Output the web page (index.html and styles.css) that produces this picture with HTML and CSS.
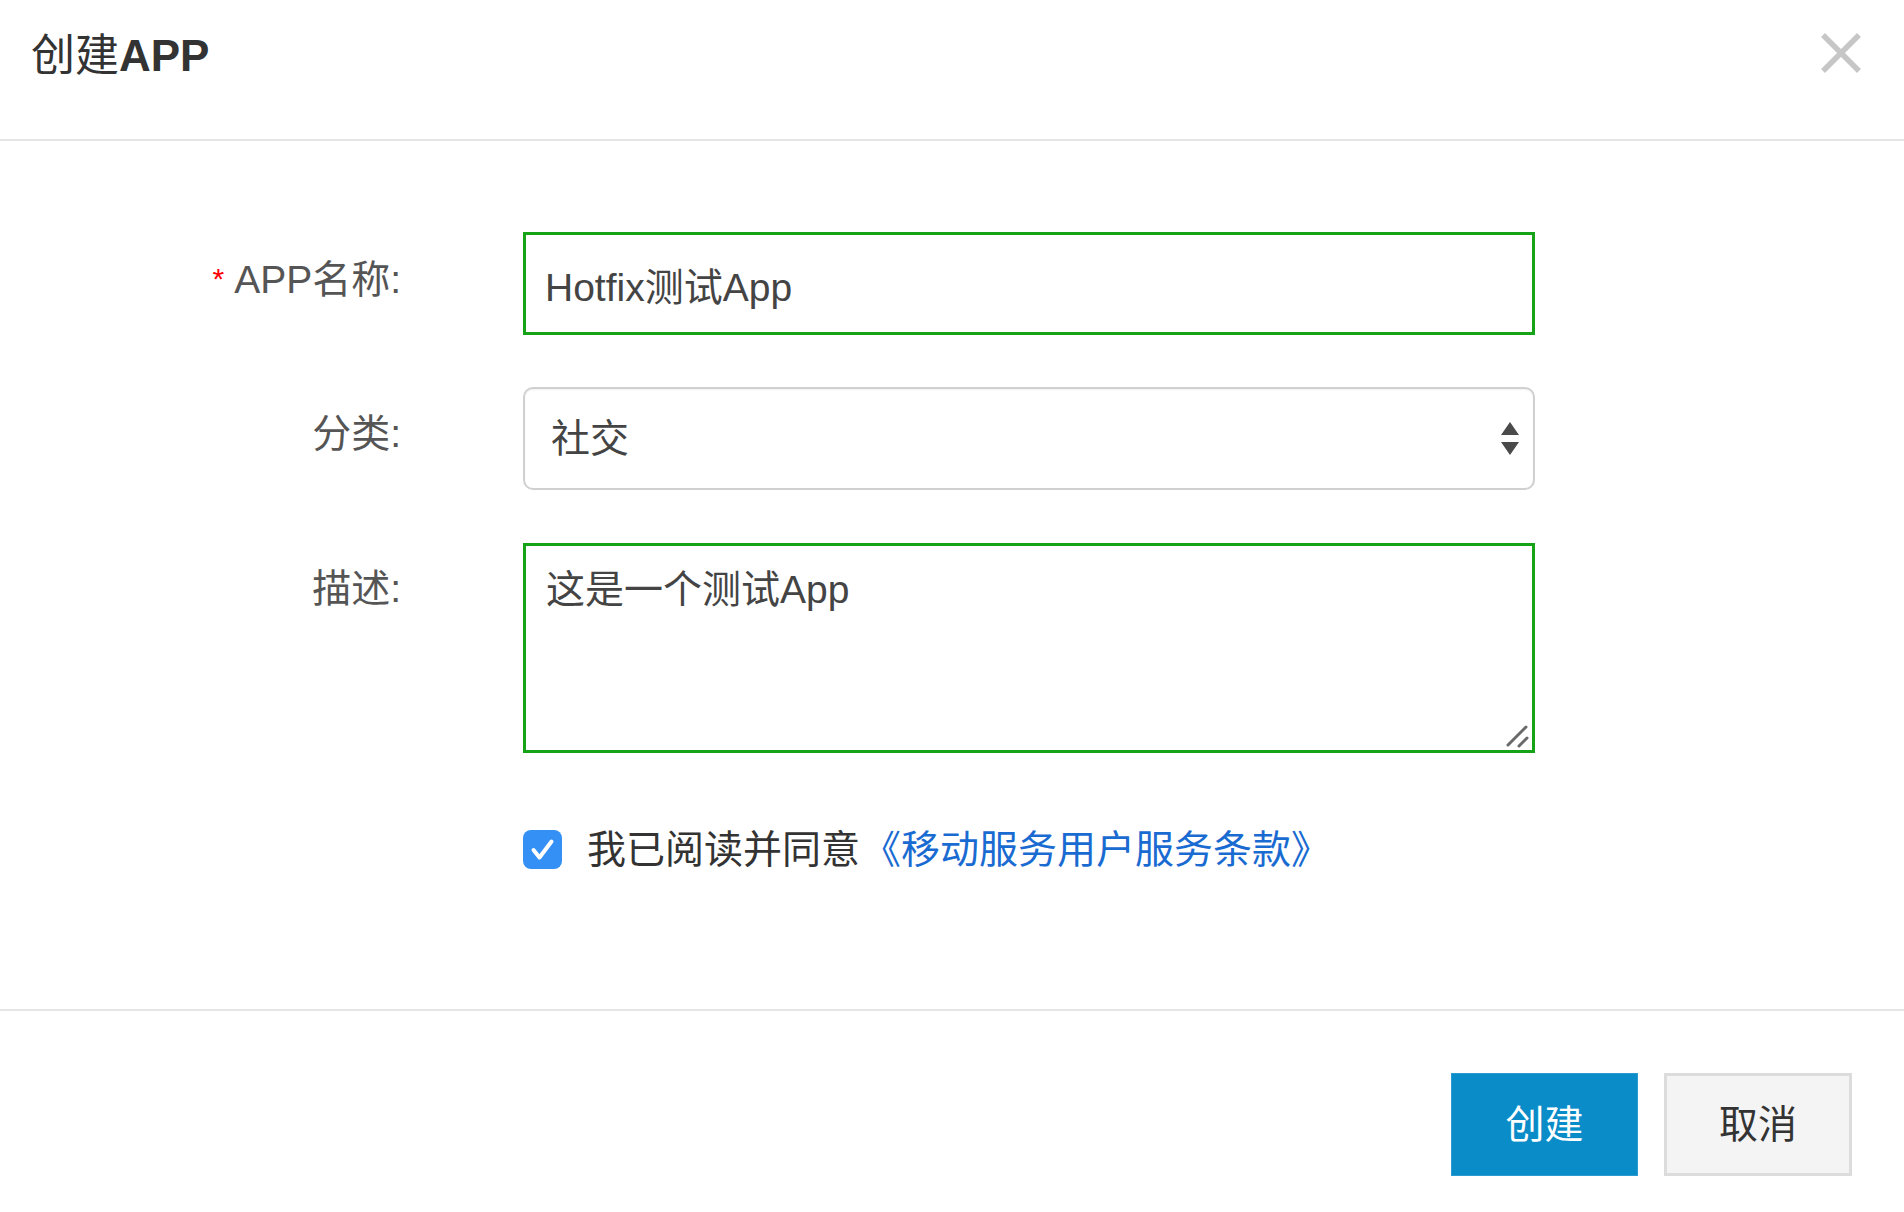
FILE: index.html
```html
<!DOCTYPE html>
<html lang="zh-CN">
<head>
<meta charset="utf-8">
<title>创建APP</title>
<link rel="stylesheet" href="styles.css">
</head>
<body>
<div class="dialog">
  <header class="dlg-head">
    <h1 class="dlg-title">创建<span class="dlg-title-en">APP</span></h1>
    <button class="dlg-close" type="button" aria-label="关闭">
      <svg width="42" height="42" viewBox="0 0 42 42"><path d="M3 3 L39 39 M39 3 L3 39" stroke="#c6c6c6" stroke-width="5.5" fill="none"/></svg>
    </button>
  </header>
  <form class="dlg-body">
    <div class="form-grid">
      <label class="field-label" for="app-name"><span class="req">*</span>APP名称:</label>
      <input id="app-name" class="field-input field-valid" type="text" value="Hotfix测试App">

      <label class="field-label" for="app-cat">分类:</label>
      <div class="select-wrap">
        <select id="app-cat" class="field-select"><option>社交</option></select>
        <svg class="select-arrows" width="18" height="33" viewBox="0 0 18 33"><path d="M9 0 L18 13 L0 13 Z M0 20 L18 20 L9 33 Z" fill="#4a4a4a"/></svg>
      </div>

      <label class="field-label" for="app-desc">描述:</label>
      <div class="textarea-wrap">
        <textarea id="app-desc" class="field-textarea field-valid">这是一个测试App</textarea>
        <svg class="textarea-grip" width="26" height="26" viewBox="0 0 26 26"><path d="M4 22 L22 4 M15 23 L23 15" stroke="#6a6a6a" stroke-width="3" stroke-linecap="round" fill="none"/></svg>
      </div>

      <span class="grid-spacer"></span>
      <label class="agree">
        <span class="agree-box"><svg width="39" height="39" viewBox="0 0 39 39"><path d="M10.5 20 L16.5 27.5 L28.5 11.5" stroke="#fff" stroke-width="4" fill="none" stroke-linecap="round" stroke-linejoin="round"/></svg></span>
        <span class="agree-text">我已阅读并同意</span><a class="agree-link" href="#">《移动服务用户服务条款》</a>
      </label>
    </div>
  </form>
  <footer class="dlg-foot">
    <button class="btn btn-primary" type="button">创建</button>
    <button class="btn btn-default" type="button">取消</button>
  </footer>
</div>
</body>
</html>
```
FILE: styles.css
```css
* { box-sizing: border-box; }
html, body { margin: 0; padding: 0; background: #fff; }
body {
  font-family: "Liberation Sans", "Noto Sans CJK SC", sans-serif;
  color: #333;
}
.dialog { width: 1904px; height: 1212px; display: flex; flex-direction: column; }

.dlg-head {
  height: 141px;
  border-bottom: 2px solid #e5e5e5;
  display: flex;
  justify-content: space-between;
  align-items: flex-start;
  padding: 0 42px 0 31px;
  flex: none;
}
.dlg-title {
  margin: 34px 0 0;
  font-size: 44px;
  line-height: 44px;
  font-weight: normal;
  color: #333;
}
.dlg-title-en { font-weight: bold; }
.dlg-close {
  margin-top: 32px;
  padding: 0;
  border: 0;
  background: none;
  width: 42px;
  height: 42px;
  display: block;
}
.dlg-close svg { display: block; }

.dlg-body { padding: 91px 0 140px; flex: none; }
.form-grid {
  display: grid;
  grid-template-columns: 401px 1012px;
  grid-template-rows: 103px 103px 236px 39px;
  column-gap: 122px;
  row-gap: 52px;
}
.field-label {
  text-align: right;
  font-size: 39px;
  line-height: 39px;
  color: #555;
  padding-top: 27px;
}
.req {
  color: #f00;
  font-size: 30px;
  margin-right: 10px;
  vertical-align: 4px;
}
.field-input, .field-textarea, .field-select {
  font-family: "Liberation Sans", "Noto Sans CJK SC", sans-serif;
  font-size: 39px;
  color: #444;
  width: 1012px;
  margin: 0;
  outline: none;
  background: #fff;
}
.field-valid { border: 3px solid #17a317; border-radius: 0; }
.field-input {
  height: 103px;
  padding: 0 19px;
}
.select-wrap { position: relative; height: 103px; }
.field-select {
  -webkit-appearance: none;
  appearance: none;
  height: 103px;
  border: 2px solid #d0d0d0;
  border-radius: 10px;
  box-shadow: inset 0 1px 2px rgba(0,0,0,0.06);
  padding: 0 26px;
  color: #444;
}
.select-arrows { position: absolute; right: 16px; top: 35px; pointer-events: none; }
.textarea-wrap { position: relative; height: 210px; margin-top: 1px; }
.field-textarea {
  display: block;
  height: 210px;
  padding: 24px 20px;
  line-height: 39px;
  resize: none;
}
.textarea-grip { position: absolute; right: 5px; bottom: 4px; pointer-events: none; }
.agree {
  display: flex;
  align-items: center;
  height: 39px;
  font-size: 39px;
  line-height: 39px;
  color: #333;
}
.agree-box {
  width: 39px;
  height: 39px;
  border-radius: 8px;
  background: #3590f5;
  margin-right: 25px;
  flex: none;
}
.agree-box svg { display: block; }
.agree-link { color: #1a6bd1; text-decoration: none; margin-left: 2px; }

.dlg-foot {
  border-top: 2px solid #e5e5e5;
  padding: 62px 52px 36px;
  display: flex;
  justify-content: flex-end;
  gap: 26px;
  flex: none;
}
.btn {
  height: 103px;
  font-family: "Liberation Sans", "Noto Sans CJK SC", sans-serif;
  font-size: 39px;
  padding: 0 0 8px;
  border-radius: 0;
  cursor: pointer;
}
.btn-primary {
  width: 187px;
  background: #0a8cc8;
  border: 1px solid #2a9ad0;
  color: #fff;
}
.btn-default {
  width: 188px;
  background: #f4f4f4;
  border: 3px solid #dcdcdc;
  color: #333;
}
```
